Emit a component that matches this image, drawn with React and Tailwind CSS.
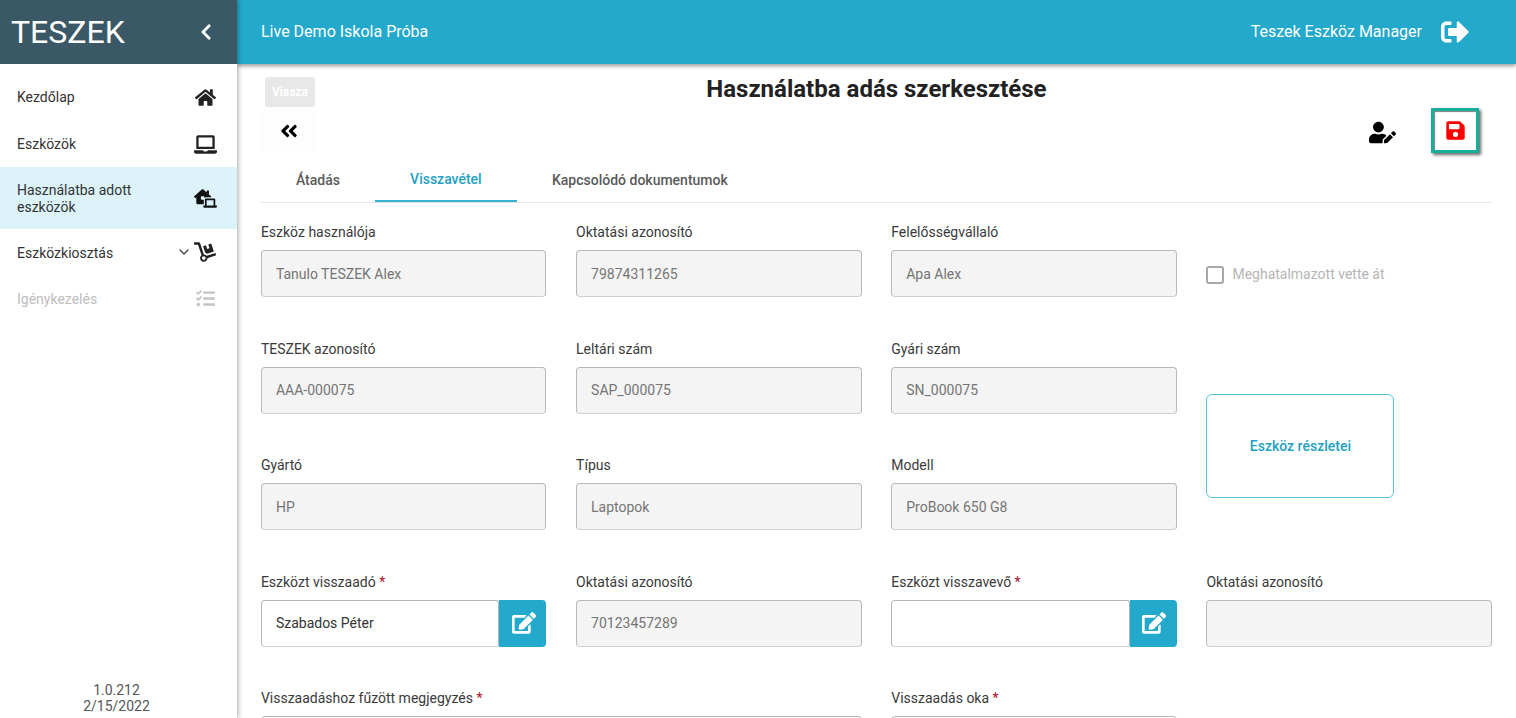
import React from "react";
import { FaHome, FaLaptop, FaLaptopHouse, FaDolly, FaTasks, FaChevronLeft, FaSignOutAlt, FaAngleDoubleLeft, FaUserEdit, FaSave, FaEdit } from "react-icons/fa";
import { LuChevronDown } from "react-icons/lu";

function NavItem({ label, icon, active, disabled, chevron, tall, rowCls = "", labelCls = "" }) {
  return (
    <div className={`flex items-center pl-[17px] pr-[20px] ${tall ? "h-[62px]" : "h-[46px]"} ${active ? "bg-[#dcf3fa]" : ""} ${disabled ? "text-[#bdbdbd]" : "text-[#333333]"} ${rowCls}`}>
      <span className={`flex-1 text-[14px] leading-[17px] w-[130px] ${labelCls}`}>{label}</span>
      {chevron && <LuChevronDown className="text-[16px] mr-[1px] text-[#444444]" />}
      <span className="w-[24px] flex justify-center">{icon}</span>
    </div>
  );
}

function Field({ label, value, required, edit }) {
  return (
    <div className="h-[116.5px]">
      <div className="h-[26px] text-[14px] leading-[17px] text-[#3a3a3a]">
        {label}{required && <span className="text-[#b01030]"> *</span>}
      </div>
      {edit ? (
        <div className="flex h-[47px]">
          <div className="flex-1 min-w-0 border border-[#b5b5b5] border-b-[#d0d0d0] rounded-l-[4px] rounded-r-[3px] bg-white flex items-center pl-[14px] text-[14px] text-[#333333]">{value}</div>
          <div className="w-[47px] bg-[#23a9cb] rounded-r-[4px] flex items-center justify-center">
            <FaEdit className="text-white text-[24px] ml-[2px]" />
          </div>
        </div>
      ) : (
        <div className="h-[47px] pt-[1px] border border-[#b9b9b9] border-b-[#d0d0d0] rounded-[4px] bg-[#f4f4f4] flex items-center pl-[14px] text-[14px] text-[#757575]">{value}</div>
      )}
    </div>
  );
}

function Tab({ label, active, width }) {
  return (
    <div className={`h-[44px] flex items-center justify-center text-[14px] font-medium ${width} ${active ? "text-[#23a1c4] border-b-2 border-[#35b2d2]" : "text-[#5a5a5a]"}`}>{label}</div>
  );
}

export default function App() {
  return (
    <div className="flex h-[718px] w-[1516px] overflow-hidden bg-white font-['Roboto',sans-serif]">
      <aside className="relative z-20 w-[237px] shrink-0 flex flex-col bg-white shadow-[1px_0_5px_rgba(0,0,0,0.35)]">
        <div className="h-[64px] bg-[#3a5866] flex items-center justify-between pl-[11px] pr-[22px]">
          <span className="text-white text-[32px] font-normal leading-none">TESZEK</span>
          <FaChevronLeft className="text-white text-[18px]" />
        </div>
        <nav className="pt-[11px]">
          <NavItem rowCls="pb-[2px]" label="Kezdőlap" icon={<FaHome className="text-[21px] text-[#222222]" />} />
          <NavItem label="Eszközök" icon={<FaLaptop className="text-[23px] text-[#222222]" />} />
          <NavItem active tall labelCls="pt-[2px]" label="Használatba adott eszközök" icon={<FaLaptopHouse className="text-[23px] text-[#111111]" />} />
          <NavItem chevron labelCls="pt-[2px]" label="Eszközkiosztás" icon={<FaDolly className="text-[22px] text-[#222222]" />} />
          <NavItem disabled labelCls="pt-[2px]" label="Igénykezelés" icon={<FaTasks className="text-[19px] text-[#c4c4c4]" />} />
        </nav>
        <div className="mt-auto h-[36px] pr-[4px] text-center text-[14px] leading-[16px] text-[#555555]">
          <div>1.0.212</div>
          <div>2/15/2022</div>
        </div>
      </aside>

      <div className="flex-1 min-w-0 flex flex-col">
        <header className="relative z-10 h-[64px] shrink-0 bg-[#23a9cb] shadow-[0_2px_4px_rgba(0,0,0,0.4)] flex items-center justify-between pl-[24px] pr-[47px] text-white text-[16px] font-normal">
          <span>Live Demo Iskola Próba</span>
          <div className="flex items-center gap-[19px]">
            <span>Teszek Eszköz Manager</span>
            <FaSignOutAlt className="text-[28px]" />
          </div>
        </header>

        <main className="flex-1 min-h-0 overflow-hidden pl-[23.9px] pr-[24px]">
          <div className="h-[94px] grid grid-cols-[1fr_auto_1fr]">
            <div className="pt-[13px]">
              <div className="ml-[4px] w-[50px] h-[30px] rounded-[3px] bg-[#e8e8e8] text-white text-[12px] font-bold flex items-center justify-center">Vissza</div>
              <div className="mt-[3px] w-[56px] h-[42px] rounded-[4px] bg-[#fdfdfd] flex items-center justify-center">
                <FaAngleDoubleLeft className="text-[20px] text-black" />
              </div>
            </div>
            <h1 className="pt-[10px] text-[24px] leading-[31px] font-bold text-[#222222]">Használatba adás szerkesztése</h1>
            <div className="flex items-start justify-end pt-[44px] pr-[13px] gap-[35px]">
              <FaUserEdit className="text-[27px] text-black mt-[11px]" />
              <div className="w-[48px] h-[45px] border-[3px] border-[#17ae9c] bg-white shadow-[2px_2px_3px_rgba(0,0,0,0.6),inset_1px_1px_1px_rgba(0,0,0,0.5)] flex items-center justify-center">
                <FaSave className="text-[21px] text-[#ff0000]" />
              </div>
            </div>
          </div>

          <div className="flex h-[45px] border-b border-[#e6e6e6]">
            <Tab label="Átadás" width="w-[114px]" />
            <Tab active label="Visszavétel" width="w-[142px]" />
            <Tab label="Kapcsolódó dokumentumok" width="w-[246px]" />
          </div>

          <div className="pt-[21px] grid grid-cols-4 gap-x-[29.6px]">
            <Field label="Eszköz használója" value="Tanulo TESZEK Alex" />
            <Field label="Oktatási azonosító" value="79874311265" />
            <Field label="Felelősségvállaló" value="Apa Alex" />
            <div className="pt-[27px]">
              <div className="h-[47px] flex items-center gap-[8px] text-[14px] text-[#b5b5b5]">
                <span className="w-[18px] h-[18px] border-2 border-[#a8a8a8] rounded-[3px] bg-white" />
                Meghatalmazott vette át
              </div>
            </div>

            <Field label="TESZEK azonosító" value="AAA-000075" />
            <Field label="Leltári szám" value="SAP_000075" />
            <Field label="Gyári szám" value="SN_000075" />
            <div className="row-span-2 pt-[53px]">
              <div className="w-[188px] h-[104px] pt-[1px] border border-[#5cc4df] rounded-[6px] flex items-center justify-center text-[14px] font-medium text-[#23a1c4]">Eszköz részletei</div>
            </div>

            <Field label="Gyártó" value="HP" />
            <Field label="Típus" value="Laptopok" />
            <Field label="Modell" value="ProBook 650 G8" />

            <Field required edit label="Eszközt visszaadó" value="Szabados Péter" />
            <Field label="Oktatási azonosító" value="70123457289" />
            <Field required edit label="Eszközt visszavevő" value="" />
            <Field label="Oktatási azonosító" value="" />

            <div className="col-span-2">
              <div className="h-[26px] text-[14px] leading-[17px] text-[#3a3a3a]">Visszaadáshoz fűzött megjegyzés <span className="text-[#b01030]">*</span></div>
              <div className="h-[47px] border border-[#b5b5b5] rounded-[4px] bg-white" />
            </div>
            <div>
              <div className="h-[26px] text-[14px] leading-[17px] text-[#3a3a3a]">Visszaadás oka <span className="text-[#b01030]">*</span></div>
              <div className="h-[47px] border border-[#b5b5b5] rounded-[4px] bg-white" />
            </div>
          </div>
        </main>
      </div>
    </div>
  );
}
